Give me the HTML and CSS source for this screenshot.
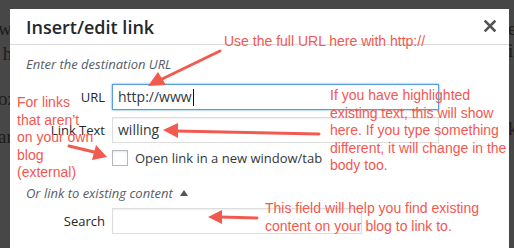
FILE: index.html
```html
<!DOCTYPE html>
<html lang="en">
<head>
  <meta charset="UTF-8" />
  <title>Insert/edit link</title>
  <link rel="stylesheet" href="styles.css">
</head>
<body>

  <!-- Page behind the overlay -->
  <div class="page">
    <div class="peek left">
      <p class="l1">wh</p>
      <p class="l2">&nbsp;h</p>
      <p class="l3">oz</p>
      <p class="l4">ar</p>
    </div>
    <div class="peek right">
      <p class="r1">es</p>
      <p class="r2">i</p>
      <p class="r3">k</p>
    </div>
  </div>

  <!-- Dialog -->
  <div class="dialog">
    <div class="dialog-head">
      <h1>Insert/edit link</h1>
      <svg class="close" width="12" height="12" viewBox="0 0 12 12">
        <path d="M1.5 1.5 L10.5 10.5 M10.5 1.5 L1.5 10.5" stroke="#555" stroke-width="2.6" stroke-linecap="square"/>
      </svg>
    </div>
    <div class="dialog-body">
      <p class="howto">Enter the destination URL</p>
      <div class="fields">
        <label>URL</label>
        <div class="input focus url">http://www<span class="caret"></span></div>
        <label>Link Text</label>
        <div class="input url">willing</div>
        <span></span>
        <div class="check"><span class="box"></span>Open link in a new window/tab</div>
      </div>
      <p class="howto toggle">Or link to existing content <span class="tri"></span></p>
      <div class="fields">
        <label>Search</label>
        <div class="input search"></div>
      </div>
    </div>
  </div>

  <!-- Annotations -->
  <div class="note n-url">Use the full URL here with http://</div>
  <div class="note n-text">If you have highlighted<br>existing text, this will show<br>here. If you type something<br>different, it will change in the<br>body too.</div>
  <div class="note n-ext">For links<br>that aren’t<br>on your own<br>blog<br>(external)</div>
  <div class="note n-search">This field will help you find existing<br>content on your blog to link to.</div>

  <svg class="arrows" width="514" height="248" viewBox="0 0 514 248">
    <g stroke="#f25a50" stroke-width="3" stroke-linecap="round" fill="#f25a50">
      <line x1="220" y1="51" x2="160" y2="80"/>
      <polygon points="148,86 158,72 166,85" stroke="none"/>
      <line x1="319" y1="134" x2="176" y2="131"/>
      <polygon points="163,130 178,123 178,138" stroke="none"/>
      <line x1="69" y1="146" x2="94" y2="152"/>
      <polygon points="107,157 92,160 96,145" stroke="none"/>
      <line x1="257" y1="218" x2="220" y2="217"/>
      <polygon points="208,217 222,210 222,224" stroke="none"/>
    </g>
  </svg>

</body>
</html>
```

FILE: styles.css
```css
* {
  box-sizing: border-box;
}
html, body {
  margin: 0;
  padding: 0;
  width: 514px;
  height: 248px;
  overflow: hidden;
}
body {
  position: relative;
  background-color: #474747;
  font-family: 'Open Sans', sans-serif;
}

/* Page behind the overlay */
.peek {
  position: absolute;
  top: 0;
  font-family: 'Liberation Serif', serif;
  font-size: 19px;
  color: #1c1c1c;
}
.peek p {
  margin: 0;
  position: absolute;
  white-space: nowrap;
}
.peek.left { left: -2px; }
.peek.right { left: 508px; }
.l1 { top: 18px; }
.l2 { top: 43px; }
.l3 { top: 88px; }
.l4 { top: 126px; }
.r1 { top: 18px; }
.r2 { top: 40px; }
.r3 { top: 118px; }

/* Dialog */
.dialog {
  position: absolute;
  left: 10px;
  top: 9px;
  width: 499px;
  height: 260px;
  background: #fff;
  color: #32373c;
}
.dialog-head {
  height: 36px;
  border-bottom: 1px solid #dcdcdc;
  display: flex;
  align-items: center;
  justify-content: space-between;
  padding: 0 13px 0 16px;
}
.dialog-head h1 {
  margin: 0;
  font-size: 18px;
  font-weight: 600;
  color: #23282d;
}
.close {
  margin-top: -1px;
}
.dialog-body {
  padding: 10px 16px 0 16px;
}
.howto {
  margin: 0;
  font-style: italic;
  font-size: 13px;
  color: #555d66;
  line-height: 18px;
}
.fields {
  display: grid;
  grid-template-columns: 79px auto;
  column-gap: 7px;
  row-gap: 7px;
  align-items: center;
  margin-top: 11px;
  font-size: 13px;
}
.fields label {
  text-align: right;
  color: #23282d;
}
.input {
  height: 26px;
  border: 1px solid #ddd;
  box-shadow: inset 0 1px 2px rgba(0,0,0,0.07);
  padding: 0 5px;
  font-size: 14px;
  line-height: 24px;
  color: #32373c;
}
.input.url { width: 327px; }
.input.search { width: 250px; }
.input.focus {
  border-color: #5b9dd9;
  box-shadow: 0 0 2px rgba(30,140,190,0.8);
}
.caret {
  display: inline-block;
  width: 1px;
  height: 17px;
  background: #111;
  vertical-align: -4px;
  margin-left: 1px;
}
.check {
  display: flex;
  align-items: center;
  gap: 7px;
  font-size: 13px;
  margin-top: -1px;
}
.box {
  width: 16px;
  height: 16px;
  border: 1px solid #b4b9be;
  box-shadow: inset 0 1px 2px rgba(0,0,0,0.1);
}
.toggle {
  margin-top: 17px;
}
.tri {
  display: inline-block;
  width: 0;
  height: 0;
  border-left: 4px solid transparent;
  border-right: 4px solid transparent;
  border-bottom: 6px solid #555;
  margin-left: 4px;
  vertical-align: 2px;
}
.toggle + .fields {
  margin-top: 6px;
}

/* Annotations */
.note {
  position: absolute;
  font-family: 'Liberation Sans', Arial, sans-serif;
  font-size: 14px;
  line-height: 17.5px;
  color: #f5574f;
  white-space: nowrap;
}
.n-url { left: 224px; top: 33px; }
.n-text { left: 330px; top: 87px; }
.n-ext { left: 17px; top: 94px; }
.n-search { left: 265px; top: 200px; }
.arrows {
  position: absolute;
  left: 0;
  top: 0;
}
```
